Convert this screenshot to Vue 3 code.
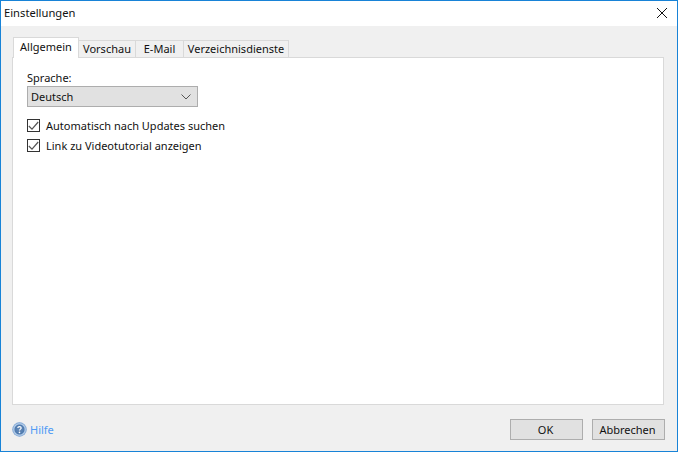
<template>
  <div class="window">
    <header class="titlebar">
      <span class="title">Einstellungen</span>
      <svg class="close" width="12" height="12" viewBox="0 0 12 12" aria-label="Schließen">
        <path d="M1 1 L11 11 M11 1 L1 11" stroke="#111" stroke-width="1" fill="none" />
      </svg>
    </header>
    <main class="body">
      <nav class="tabs">
        <div
          v-for="tab in tabs"
          :key="tab.label"
          class="tab"
          :class="{ active: tab.active }"
          :style="{ width: tab.width + 'px' }"
        >{{ tab.label }}</div>
      </nav>
      <section class="panel">
        <label class="lang-label">Sprache:</label>
        <div class="select">
          <span>Deutsch</span>
          <svg width="10" height="6" viewBox="0 0 10 6">
            <path d="M0.5 0.5 L5 5 L9.5 0.5" stroke="#555" stroke-width="1" fill="none" />
          </svg>
        </div>
        <div class="checks">
          <div v-for="c in checks" :key="c" class="check">
            <span class="box">
              <svg width="11" height="10" viewBox="0 0 11 10">
                <path d="M0.8 5 L4 8.2 L10.2 1" stroke="#555" stroke-width="1.2" fill="none" />
              </svg>
            </span>
            <span>{{ c }}</span>
          </div>
        </div>
      </section>
      <footer class="footer">
        <div class="help">
          <svg width="15" height="15" viewBox="0 0 15 15">
            <defs>
              <radialGradient id="helpGrad" cx="50%" cy="50%" r="50%">
                <stop offset="0%" stop-color="#6a8db8" />
                <stop offset="62%" stop-color="#4f7bb0" />
                <stop offset="78%" stop-color="#b9d0ea" />
                <stop offset="100%" stop-color="#6f9bd0" />
              </radialGradient>
            </defs>
            <circle cx="7.5" cy="7.5" r="7.2" fill="url(#helpGrad)" />
            <path d="M5.8 6 C5.8 4.2 9.2 4.2 9.2 6 C9.2 7.2 7.5 7.1 7.5 8.6" stroke="#fff" stroke-width="1.2" fill="none" />
            <circle cx="7.5" cy="10.4" r="0.8" fill="#fff" />
          </svg>
          <span>Hilfe</span>
        </div>
        <div class="buttons">
          <button class="btn">OK</button>
          <button class="btn">Abbrechen</button>
        </div>
      </footer>
    </main>
  </div>
</template>

<script setup>
const tabs = [
  { label: 'Allgemein', active: true, width: 66 },
  { label: 'Vorschau', width: 57 },
  { label: 'E-Mail', width: 48 },
  { label: 'Verzeichnisdienste', width: 105 }
]
const checks = ['Automatisch nach Updates suchen', 'Link zu Videotutorial anzeigen']
</script>

<style>
html, body { margin: 0; padding: 0; background: #fff; }
</style>

<style scoped>
.window {
  width: 678px;
  height: 452px;
  box-sizing: border-box;
  border: 1px solid #1883d7;
  display: flex;
  flex-direction: column;
  font-family: "Noto Sans", "Open Sans", sans-serif;
  font-size: 11px;
  color: #111;
  background: #f0f0f0;
  overflow: hidden;
}
.titlebar {
  height: 25px;
  background: #fff;
  display: flex;
  align-items: center;
  justify-content: space-between;
  padding: 0 9px 1px 3px;
  box-sizing: border-box;
  flex: none;
}
.title { font-size: 11.2px; line-height: 13px; margin-bottom: 1px; }
.body {
  flex: 1;
  display: flex;
  flex-direction: column;
  padding: 12px 13px 0 11px;
  min-height: 0;
}
.tabs {
  display: flex;
  align-items: flex-end;
  height: 20px;
  padding-left: 1px;
  position: relative;
  z-index: 1;
  margin-bottom: -1px;
}
.tab {
  height: 18px;
  box-sizing: border-box;
  border: 1px solid #d9d9d9;
  border-left-width: 0;
  background: #f0f0f0;
  text-align: center;
  line-height: 16px;
}
.tab.active {
  height: 21px;
  background: #fff;
  border-width: 1px 1px 0 1px;
  line-height: 18px;
}
.panel {
  flex: 1;
  background: #fff;
  border: 1px solid #d9d9d9;
  padding: 12px 14px;
  display: flex;
  flex-direction: column;
  align-items: flex-start;
}
.lang-label { line-height: 15px; height: 15px; }
.select {
  width: 171px;
  height: 21px;
  margin-top: 1px;
  box-sizing: border-box;
  background: #e1e1e1;
  border: 1px solid #adadad;
  display: flex;
  align-items: center;
  justify-content: space-between;
  padding: 0 6px 0 3px;
}
.checks {
  margin-top: 12px;
  display: flex;
  flex-direction: column;
  gap: 7px;
}
.check {
  display: flex;
  align-items: center;
  gap: 6px;
  height: 13px;
}
.box {
  width: 13px;
  height: 13px;
  box-sizing: border-box;
  border: 1px solid #333;
  background: #fff;
  display: flex;
  align-items: center;
  justify-content: center;
}
.footer {
  height: 46px;
  flex: none;
  display: flex;
  align-items: center;
  justify-content: space-between;
  padding-top: 3px;
  box-sizing: border-box;
}
.help {
  display: flex;
  align-items: center;
  gap: 3px;
  color: #4f9bf5;
}
.buttons { display: flex; gap: 9px; margin-right: -1px; }
.btn {
  width: 73px;
  height: 21px;
  box-sizing: border-box;
  background: #e1e1e1;
  border: 1px solid #adadad;
  font: inherit;
  color: #111;
  padding: 0 2px 0 0;
}
</style>
